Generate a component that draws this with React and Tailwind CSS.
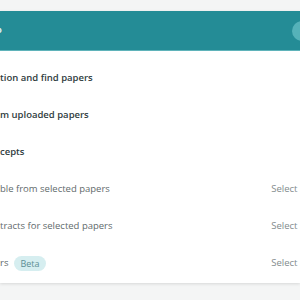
const rows = [
  { label: 'tion and find papers', bold: true },
  { label: 'm uploaded papers', bold: true },
  { label: 'cepts', bold: true },
  { label: 'ble from selected papers', select: true },
  { label: 'tracts for selected papers', select: true },
  { label: 'rs', select: true, beta: true },
];

export default function App() {
  return (
    <div className="w-[300px] h-[300px] overflow-hidden bg-[#f4f5f5] font-['Open_Sans',sans-serif] text-[9.5px]">
      <div className="h-[11px]" />
      <div className="bg-white shadow-[0_1px_3px_rgba(0,0,0,0.12)]">
        <div className="h-[40px] bg-[#248c96] flex items-center justify-between border-b border-[#5fb3ba]">
          <span className="text-white font-semibold ml-[-4px]">o</span>
          <div className="w-[20px] h-[20px] rounded-full bg-[#55b2b9] mr-[-12px]" />
        </div>
        <div className="pt-[9px] pb-[1px]">
          {rows.map((r) => (
            <div key={r.label} className="h-[37px] flex items-center justify-between">
              <div className="flex items-center gap-[6px] whitespace-nowrap">
                <span className={r.bold ? 'font-semibold text-[#2f3c3e]' : 'text-[#5f6a6c]'}>{r.label}</span>
                {r.beta && (
                  <span className="bg-[#d6eef0] text-[#5d8e94] text-[9px] rounded-full px-[6px] h-[15px] flex items-center">Beta</span>
                )}
              </div>
              {r.select && <span className="text-[#828b8d] whitespace-nowrap mr-[-10px]">Select all</span>}
            </div>
          ))}
        </div>
      </div>
    </div>
  );
}
